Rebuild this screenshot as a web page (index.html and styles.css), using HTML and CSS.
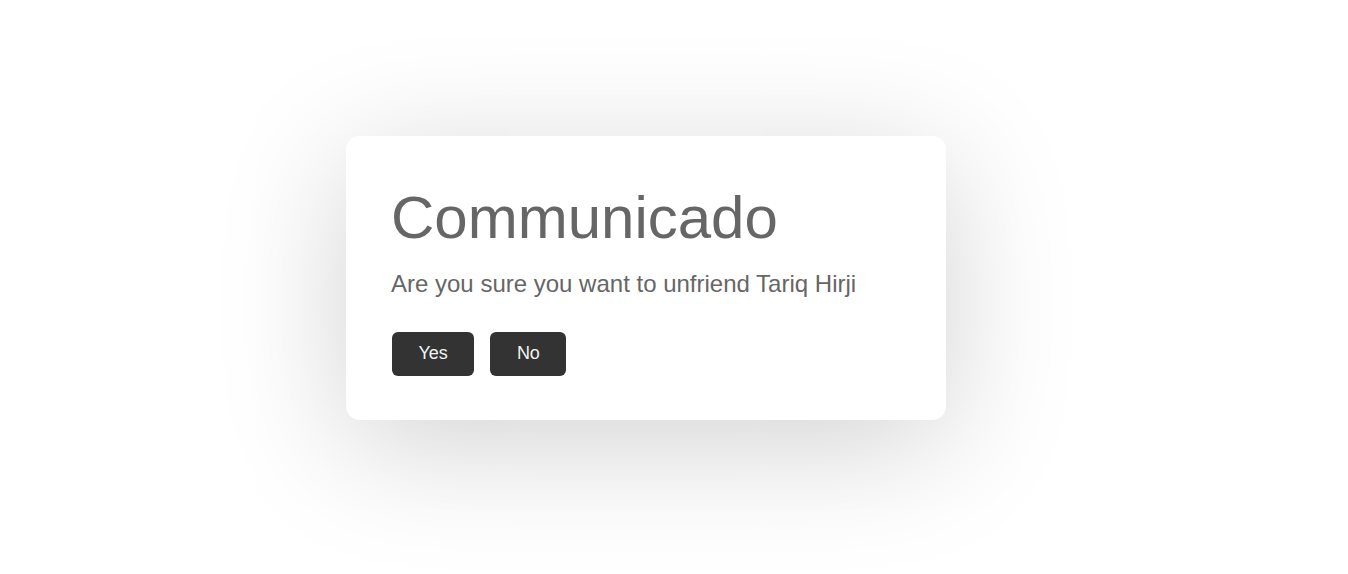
FILE: index.html
```html
<!DOCTYPE html>
<html lang="en">
<head>
<meta charset="utf-8">
<title>Communicado</title>
<link rel="stylesheet" href="styles.css">
</head>
<body>
<div class="stage">
  <div class="dialog" role="dialog" aria-labelledby="dlg-title">
    <h1 class="dialog-title" id="dlg-title">Communicado</h1>
    <p class="dialog-message">Are you sure you want to unfriend Tariq Hirji</p>
    <div class="dialog-actions">
      <button class="btn" type="button">Yes</button>
      <button class="btn" type="button">No</button>
    </div>
  </div>
</div>
</body>
</html>
```
FILE: styles.css
```css
html, body {
  margin: 0;
  padding: 0;
  background: #ffffff;
  height: 100%;
}
body {
  font-family: "Liberation Sans", Arial, sans-serif;
  color: #666666;
  overflow: hidden;
}
.stage {
  box-sizing: border-box;
  min-height: 100%;
  height: 574px;
  padding: 136px 0 0 346px;
}
.dialog {
  box-sizing: border-box;
  width: 600px;
  height: 284px;
  padding: 48px 46px 44px 45px;
  background: #ffffff;
  border-radius: 14px;
  box-shadow: 0 25px 130px rgba(0, 0, 0, 0.18);
}
.dialog-title {
  margin: 0;
  font-size: 60px;
  font-weight: normal;
  line-height: 67px;
  color: #666666;
}
.dialog-message {
  margin: 19px 0 0;
  font-size: 24px;
  line-height: 28px;
  color: #666666;
}
.dialog-actions {
  display: flex;
  gap: 16px;
  margin-top: 34px;
  padding-left: 1px;
}
.btn {
  height: 44px;
  padding: 0 26.5px 2px;
  border: none;
  border-radius: 6px;
  background: #333333;
  color: #f2f2f2;
  font-family: "Liberation Sans", Arial, sans-serif;
  font-size: 18px;
  cursor: pointer;
}
```
